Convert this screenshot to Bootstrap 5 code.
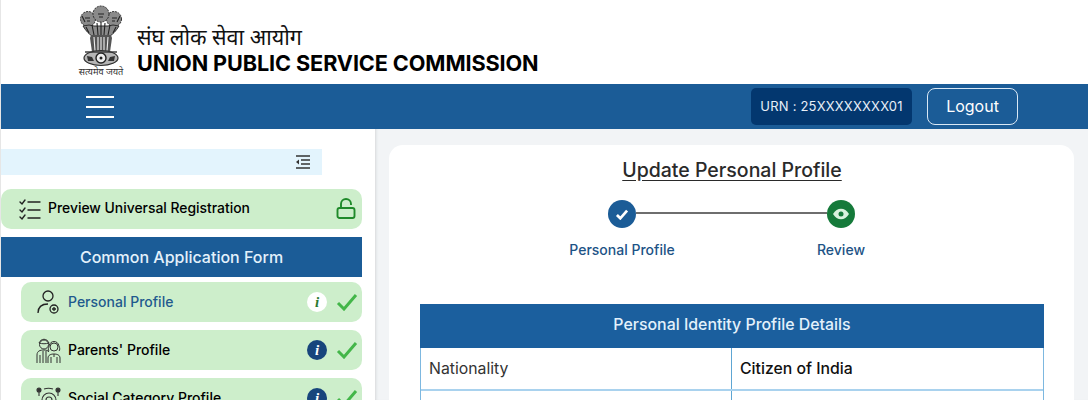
<!DOCTYPE html>
<html lang="en">
<head>
    <meta charset="UTF-8">
    <meta name="viewport" content="width=device-width, initial-scale=1.0">
    <title>Update Personal Profile</title>
    <link href="https://cdn.jsdelivr.net/npm/bootstrap@5.3.0/dist/css/bootstrap.min.css" rel="stylesheet">
    <style>
        html, body { height: 400px; overflow: hidden; }
        body { font-family: Inter, "Noto Sans", "Liberation Sans", sans-serif; background: #fff; color: #212529; border-left: 1px solid #e6e6e6; }
        .site-head { height: 84px; padding-left: 77px; }
        .emblem-box { width: 46px; padding-top: 5px; text-align: center; }
        .emblem { display: block; width: 46px; height: 62px; }
        .emblem-motto { font-family: "Noto Sans", "Noto Sans CJK SC", "Liberation Sans", sans-serif; font-size: 9.2px; line-height: 10px; color: #333; white-space: nowrap; }
        .head-text { margin-left: 13px; padding-top: 24px; }
        .hindi-name { font-family: "Noto Sans", "Noto Sans CJK SC", "Liberation Sans", sans-serif; font-size: 21.5px; line-height: 26px; color: #111; }
        .eng-name { font-size: 21.65px; line-height: 26px; font-weight: 700; color: #000; letter-spacing: -0.1px; }
        .top-bar { height: 45px; background: #1b5c97; }
        .burger { margin-left: 85px; width: 28px; }
        .burger span { display: block; height: 2px; background: #fff; margin: 8px 0; }
        .urn-box { background: #03376f; color: #e8f0f8; font-size: 13px; letter-spacing: .2px; border-radius: 5px; height: 37px; width: 161px; }
        .logout-btn { width: 91px; height: 37px; margin-left: 15px; margin-right: 70px; padding: 0 0 2px; border: 1px solid #d9e8f5; border-radius: 8px; color: #fff; font-size: 16px; background: transparent; }
        .body-row { height: 271px; }
        .side-col { width: 374px; flex: none; padding-top: 20px; }
        .toggle-strip { height: 26px; width: 321px; background: #e3f4fd; padding-right: 11px; }
        .menu-row { height: 40px; background: #cdeecb; border-radius: 10px; width: 361px; margin-top: 8px; color: #000; font-size: 14px; font-weight: 500; padding-bottom: 2px; }
        .menu-row.top-row { margin-top: 14px; padding-left: 18px; font-size: 13.9px; }
        .menu-row.sub-row { width: 341px; margin-left: 20px; padding-left: 15px; margin-top: 8px; }
        .menu-row.sub-row.first-sub { margin-top: 5px; }
        .menu-label { margin-left: 4px; }
        .sub-row .menu-label { margin-left: 7px; }
        .sub-ic { width: 25px; height: 25px; flex: none; margin-top: 2px; }
        .on-page { color: #1f5a8e; }
        .info-dot { width: 20px; height: 20px; border-radius: 50%; background: #17457c; color: #fff; font-family: "Liberation Serif", serif; font-style: italic; font-weight: 700; font-size: 15px; line-height: 20px; text-align: center; flex: none; margin-top: 2px; }
        .info-dot.is-light { background: #fff; color: #2c7a32; }
        .tick-ic { width: 22px; height: 18px; margin: 2px 4px 0 9px; flex: none; }
        .lock-ic { margin-right: 6px; margin-top: 2px; }
        .form-head { height: 40px; width: 361px; margin-top: 8px; background: #1b5c97; color: #e3f1fb; font-size: 16px; font-weight: 500; }
        .main-col { flex: 1; background: #f2f4f6; padding: 16px 14px 0; box-shadow: inset 3px 0 3px -2px #d5d7d9; }
        .form-card { background: #fff; border-radius: 14px; height: 280px; padding: 0 30px 0 31px; }
        .page-title { font-size: 19.5px; font-weight: 500; line-height: 24px; text-decoration: underline; text-underline-offset: 3px; text-align: center; color: #2a2a2a; padding-top: 13px; margin: 0; height: 42px; box-sizing: content-box; }
        .step-wrap { width: 247px; margin-left: 188px; height: 104px; }
        .step-line { height: 2px; flex: 1; background: #6e6e6e; margin-top: 12px; }
        .step-dot { width: 28px; height: 28px; border-radius: 50%; flex: none; }
        .step-blue { background: #1b5c97; }
        .step-green { background: #157a3a; }
        .step-names { font-size: 14px; font-weight: 500; color: #1d5386; margin: 11px -56px 0; }
        .step-names span { width: 140px; text-align: center; }
        .detail-grid { border: 1px solid #7db8e0; border-top: 0; width: 624px; }
        .detail-head { background: #1b5f9e; color: #e3f1fb; height: 44px; font-size: 15.9px; font-weight: 500; margin: 0 -1px; padding-bottom: 2px; }
        .detail-row { height: 43px; border-bottom: 2px solid #a9d2ee; font-size: 15.8px; }
        .detail-key { width: 311px; padding-left: 8px; border-right: 1px solid #5ea6d3; color: #333; }
        .detail-val { padding-left: 8px; color: #111; font-weight: 500; }
    </style>
</head>
<body>
    <header class="site-head d-flex">
        <div class="emblem-box">
            <svg class="emblem" viewBox="0 0 46 62" fill="none">
                <!-- lions -->
                <g fill="#8a8a8a" stroke="#2e2e2e" stroke-width="1">
                    <circle cx="10" cy="14" r="7.5" stroke-dasharray="2 1" />
                    <circle cx="36" cy="14" r="7.5" stroke-dasharray="2 1" />
                    <circle cx="23" cy="9" r="8" stroke-dasharray="2 1" />
                    <path d="M5 21c3 5 6 8 9 10h18c3-2 6-5 9-10l-6-1-5 1H16l-5-1z" />
                </g>
                <path d="M20 9h6M21 12h4M7 13h5M9 16h3M34 13h5M34 16h3M4 11l3 6M42 11l-3 6M8 22l3 6M38 22l-3 6M14 20l2 10M19 18l1 12M23 17v13M27 18l-1 12M32 20l-2 10" stroke="#222" stroke-width="1.1" />
                <!-- legs -->
                <g fill="#555">
                    <path d="M13 30h20l1 3-2 14H14l-2-14z" />
                </g>
                <path d="M16 32l1 14M20 32v14M23 32v14M26 32v14M30 32l-1 14" stroke="#eee" stroke-width="1.1" />
                <!-- abacus -->
                <ellipse cx="23" cy="53" rx="17" ry="7.5" fill="#b5b5b5" stroke="#2e2e2e" stroke-width="1.2" />
                <circle cx="23" cy="53" r="5" fill="#eee" stroke="#222" stroke-width="1.4" />
                <circle cx="23" cy="53" r="1.5" fill="#222" />
                <path d="M9 51l5 1 2 4h-6zM37 51l-5 1-2 4h6z" fill="#333" />
                <path d="M7 47h32" stroke="#333" stroke-width="1.4" />
            </svg>
            <div class="emblem-motto">सत्यमेव जयते</div>
        </div>
        <div class="head-text">
            <div class="hindi-name">संघ लोक सेवा आयोग</div>
            <div class="eng-name">UNION PUBLIC SERVICE COMMISSION</div>
        </div>
    </header>

    <nav class="top-bar d-flex align-items-center">
        <div class="burger"><span></span><span></span><span></span></div>
        <div class="urn-box ms-auto d-flex align-items-center justify-content-center">URN : 25XXXXXXXX01</div>
        <button class="btn logout-btn" type="button">Logout</button>
    </nav>

    <div class="body-row d-flex">
        <aside class="side-col">
            <div class="toggle-strip d-flex align-items-center justify-content-end">
                <svg width="16" height="14" viewBox="0 0 16 14" stroke="#333" stroke-width="1.3" fill="none">
                    <path d="M1 1h14M6 5h9M6 9h9M1 13h14" /><path d="M4 4.5v5L1 7z" fill="#333" stroke="none" />
                </svg>
            </div>
            <div class="menu-row top-row d-flex align-items-center">
                <svg class="sub-ic" viewBox="0 0 25 25" stroke="#222" stroke-width="1.4" fill="none" stroke-linecap="round">
                    <path d="M1 5l2 2 3-4M1 13l2 2 3-4M1 20l2 2 3-4M9 5h12M9 13h12M9 21h12" />
                </svg>
                <span class="menu-label">Preview Universal Registration</span>
                <svg class="lock-ic ms-auto" width="20" height="22" viewBox="0 0 20 22" stroke="#1f8a2a" stroke-width="1.9" fill="none">
                    <rect x="1.5" y="10" width="17" height="10" rx="2" /><path d="M5 10V6a5 5 0 0 1 10 0v1" />
                </svg>
            </div>
            <div class="form-head d-flex align-items-center justify-content-center">Common Application Form</div>
            <div class="menu-row sub-row first-sub d-flex align-items-center">
                <svg class="sub-ic" viewBox="0 0 25 25" stroke="#222" stroke-width="1.3" fill="none">
                    <circle cx="12" cy="6" r="5" /><path d="M2 23c0-6 4-9 10-9" /><circle cx="18" cy="19" r="4" /><path d="M16 19h4M18 17v4" />
                </svg>
                <span class="menu-label on-page">Personal Profile</span>
                <span class="info-dot is-light ms-auto">i</span>
                <svg class="tick-ic" viewBox="0 0 22 18" stroke="#43b649" stroke-width="3" fill="none"><path d="M2 10l6 6L20 2" /></svg>
            </div>
            <div class="menu-row sub-row d-flex align-items-center">
                <svg class="sub-ic" viewBox="0 0 25 25" stroke="#333" stroke-width="1" fill="none">
                    <circle cx="8" cy="6.5" r="4.5" /><circle cx="18" cy="9" r="4" />
                    <path d="M3 5c2-5 8-5 10 0-3 1-7 1-10 0zM13 8c1-6 9-6 10 0 1 2 1 4 0 5M13 8c-1 2-1 4 0 5" />
                    <path d="M1 25v-8c0-4 3-5 7-5 2 0 4 .5 5 2M12 25v-5c0-3 3-4 6-4s6 1 6 4v5M4 17v8M7 13v12M10 13v12M15 19v6M21 19v6M18 16v3" />
                </svg>
                <span class="menu-label">Parents' Profile</span>
                <span class="info-dot ms-auto">i</span>
                <svg class="tick-ic" viewBox="0 0 22 18" stroke="#43b649" stroke-width="3" fill="none"><path d="M2 10l6 6L20 2" /></svg>
            </div>
            <div class="menu-row sub-row d-flex align-items-center">
                <svg class="sub-ic" viewBox="0 0 25 25" stroke="#333" stroke-width="1.1" fill="none">
                    <circle cx="13" cy="14" r="7" /><circle cx="13" cy="14" r="3" /><circle cx="3" cy="4" r="2" fill="#333" /><circle cx="22" cy="4" r="2" fill="#333" /><path d="M3 6v4M22 6v4M8 3c3-1 6-1 9 0" />
                </svg>
                <span class="menu-label">Social Category Profile</span>
                <span class="info-dot ms-auto">i</span>
                <svg class="tick-ic" viewBox="0 0 22 18" stroke="#43b649" stroke-width="3" fill="none"><path d="M2 10l6 6L20 2" /></svg>
            </div>
        </aside>

        <main class="main-col">
            <div class="form-card">
                <h1 class="page-title">Update Personal Profile</h1>
                <div class="step-wrap">
                    <div class="d-flex">
                        <div class="step-dot step-blue d-flex align-items-center justify-content-center">
                            <svg width="14" height="11" viewBox="0 0 16 13" stroke="#fff" stroke-width="3.2" fill="none"><path d="M2 7l4 4 8-9" /></svg>
                        </div>
                        <div class="step-line"></div>
                        <div class="step-dot step-green d-flex align-items-center justify-content-center">
                            <svg width="16" height="12" viewBox="0 0 16 12"><path d="M0 6c4-7 12-7 16 0-4 7-12 7-16 0z" fill="#d9f2de" /><circle cx="8" cy="6" r="2.5" fill="#157a3a" /></svg>
                        </div>
                    </div>
                    <div class="step-names d-flex justify-content-between">
                        <span>Personal Profile</span>
                        <span>Review</span>
                    </div>
                </div>
                <div class="detail-grid">
                    <div class="detail-head d-flex align-items-center justify-content-center">Personal Identity Profile Details</div>
                    <div class="detail-row d-flex">
                        <div class="detail-key d-flex align-items-center">Nationality</div>
                        <div class="detail-val d-flex align-items-center">Citizen of India</div>
                    </div>
                    <div class="detail-row d-flex">
                        <div class="detail-key"></div>
                        <div class="detail-val"></div>
                    </div>
                </div>
            </div>
        </main>
    </div>
    <script src="https://cdn.jsdelivr.net/npm/bootstrap@5.3.0/dist/js/bootstrap.bundle.min.js"></script>
</body>
</html>
